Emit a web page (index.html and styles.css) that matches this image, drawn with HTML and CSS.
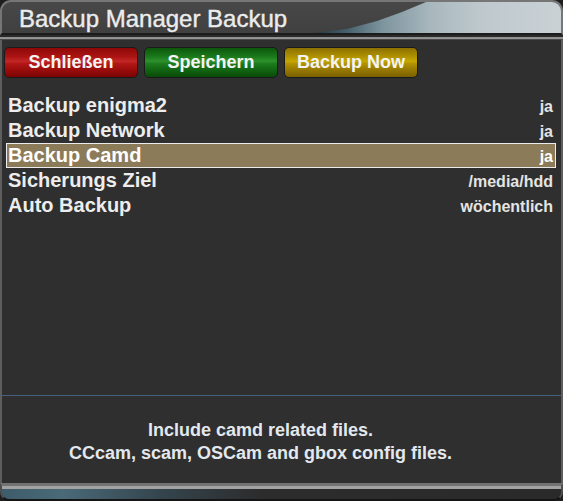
FILE: index.html
```html
<!DOCTYPE html>
<html>
<head>
<meta charset="utf-8">
<link rel="stylesheet" href="styles.css">
</head>
<body>
<div class="window">
  <div class="titlebar">
    <span class="title">Backup Manager Backup</span>
  </div>
  <div class="topsep"></div>
  <div class="content">
    <div class="buttons">
      <div class="btn red">Schließen</div>
      <div class="btn green">Speichern</div>
      <div class="btn yellow">Backup Now</div>
    </div>
    <div class="list">
      <div class="row"><span class="label">Backup enigma2</span><span class="value">ja</span></div>
      <div class="row"><span class="label">Backup Network</span><span class="value">ja</span></div>
      <div class="row selected"><span class="label">Backup Camd</span><span class="value">ja</span></div>
      <div class="row"><span class="label">Sicherungs Ziel</span><span class="value">/media/hdd</span></div>
      <div class="row"><span class="label">Auto Backup</span><span class="value">wöchentlich</span></div>
    </div>
    <div class="spacer"></div>
    <div class="desc">
      <div>Include camd related files.</div>
      <div>CCcam, scam, OSCam and gbox config files.</div>
    </div>
  </div>
  <div class="bottombar"></div>
</div>
</body>
</html>
```
FILE: styles.css
```css
html, body {
  margin: 0;
  padding: 0;
  background: #1e1e1e;
}
.window {
  width: 563px;
  height: 501px;
  display: flex;
  flex-direction: column;
  font-family: "Liberation Sans", Arial, sans-serif;
  overflow: hidden;
}
.titlebar {
  position: relative;
  flex: none;
  height: 35px;
  box-sizing: border-box;
  border: 2px solid #767676;
  border-bottom: 2px solid #1c1c1c;
  border-radius: 11px 11px 0 0;
  background: linear-gradient(to bottom, #484848, #404040);
  overflow: hidden;
}
.titlebar::before {
  content: "";
  position: absolute;
  left: 0;
  top: 0;
  right: 0;
  bottom: 0;
  background: linear-gradient(to right, #2a3438 310px, #3e5a66 340px, #7d949e 380px, #a9b8be 430px, #bfc9cd 480px, #c9d1d5 559px);
  clip-path: polygon(310px 31px, 345px 27px, 375px 19px, 400px 10px, 424px 0, 100% 0, 100% 100%);
}
.title {
  position: relative;
  display: block;
  padding: 3px 0 0 17px;
  font-size: 24px;
  line-height: 28px;
  color: #ececec;
  -webkit-text-stroke: 0.4px #ececec;
}
.topsep {
  height: 5px;
  flex: none;
  background: linear-gradient(to bottom, #2a2a2a 0, #2a2a2a 2px, #8c8c8c 2px, #9a9a9a 4px, #4a4a4a 4px);
}
.content {
  flex: 1;
  display: flex;
  flex-direction: column;
  background: #2f2f2f;
  border-left: 2px solid #5e5e5e;
  border-right: 2px solid #5e5e5e;
}
.buttons {
  display: flex;
  gap: 6px;
  padding: 7px 0 0 2px;
}
.btn {
  width: 134px;
  height: 31px;
  box-sizing: border-box;
  border-radius: 5px;
  border: 1px solid #1a1a1a;
  color: #f4f4f4;
  font-weight: bold;
  font-size: 18px;
  line-height: 29px;
  text-align: center;
}
.red {
  background: linear-gradient(to bottom, #8e0808 0%, #ac1414 30%, #c42828 46%, #b41818 52%, #a00e0e 70%, #7c0404 100%);
}
.green {
  background: linear-gradient(to bottom, #0c560c 0%, #1b7a1b 30%, #2e922e 46%, #1f7e1f 52%, #146a14 70%, #0a4a0a 100%);
}
.yellow {
  background: linear-gradient(to bottom, #8c7000 0%, #b09200 30%, #c6a800 46%, #b49600 52%, #9c7e00 70%, #7a6000 100%);
}
.list {
  display: flex;
  flex-direction: column;
  margin: 15px 5px 0 4px;
}
.row {
  display: flex;
  justify-content: space-between;
  align-items: baseline;
  height: 25px;
  box-sizing: border-box;
  border: 1px solid transparent;
  padding: 0 2px 0 1px;
  color: #ededed;
}
.row.selected {
  background: #8b7b59;
  border-color: #ececec;
  color: #ffffff;
}
.label {
  font-size: 20px;
  font-weight: bold;
  line-height: 23px;
}
.value {
  font-size: 16px;
  font-weight: bold;
  line-height: 23px;
  color: #e4e4e4;
}
.selected .value {
  color: #ffffff;
}
.spacer {
  flex: 1;
}
.desc {
  border-top: 1px solid #44607a;
  height: 88px;
  box-sizing: border-box;
  padding: 23px 42px 0 0;
  text-align: center;
  font-size: 18px;
  font-weight: bold;
  line-height: 23px;
  color: #e2e8ee;
}
.bottombar {
  flex: none;
  height: 18px;
  box-sizing: border-box;
  border-top: 3px solid #727272;
  border-left: 2px solid #4e4e4e;
  border-right: 2px solid #4e4e4e;
  border-bottom: 2px solid #151515;
  border-radius: 0 0 9px 9px;
  background:
    linear-gradient(to bottom, #a2a2a2 0, #a2a2a2 3px, transparent 3px),
    linear-gradient(to right, #3e5c6a 0, #4a6a78 60px, #34444c 160px, #2c2c2c 260px, #2a2a2a 100%);
}
```
